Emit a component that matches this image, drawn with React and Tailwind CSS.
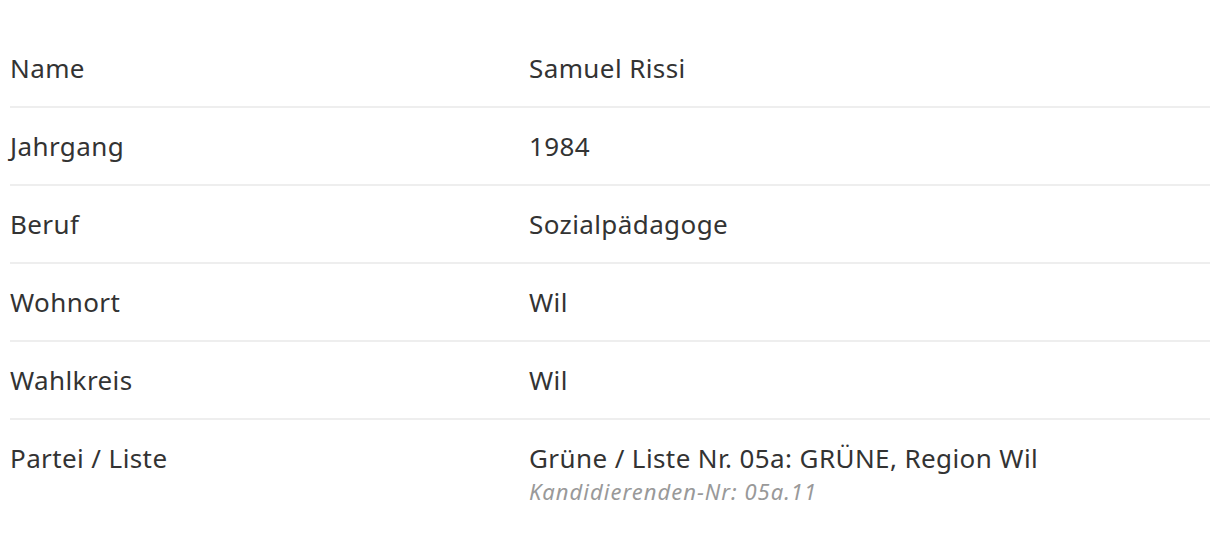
const rows = [
  { label: "Name", value: "Samuel Rissi" },
  { label: "Jahrgang", value: "1984" },
  { label: "Beruf", value: "Sozialpädagoge" },
  { label: "Wohnort", value: "Wil" },
  { label: "Wahlkreis", value: "Wil" },
  {
    label: "Partei / Liste",
    value: "Grüne / Liste Nr. 05a: GRÜNE, Region Wil",
    note: "Kandidierenden-Nr: 05a.11",
  },
];

export default function App() {
  return (
    <div className="min-h-[536px] bg-white px-[10px] pt-[30px] font-['Noto_Sans',sans-serif] text-[#333333]">
      <div className="flex flex-col">
        {rows.map((row, i) => (
          <div
            key={row.label}
            className={`flex ${i < rows.length - 1 ? "border-b-2 border-[#eeeeee] h-[78px] items-center" : "pt-[20px]"}`}
          >
            <div className="w-[519px] shrink-0 text-[26px] leading-[36px] tracking-[0.4px]">{row.label}</div>
            <div className="flex-1">
              <div className="text-[26px] leading-[36px] tracking-[0.4px]">{row.value}</div>
              {row.note && (
                <div className="text-[22px] leading-[30px] italic tracking-[1px] text-[#999999]">{row.note}</div>
              )}
            </div>
          </div>
        ))}
      </div>
    </div>
  );
}
